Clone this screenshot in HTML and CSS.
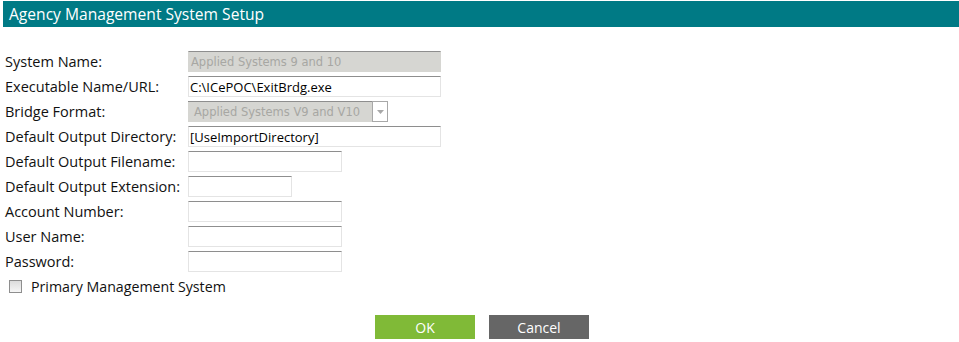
FILE: index.html
```html
<!DOCTYPE html>
<html lang="en">
  <head>
    <meta charset="UTF-8" />
    <meta name="viewport" content="width=device-width, initial-scale=1.0" />
    <title>Agency Management System Setup</title>
    <link rel="stylesheet" href="styles.css">
  </head>
  <body>
    <div class="header">Agency Management System Setup</div>
    <form class="setup">
      <div class="fields">
        <label>System Name:</label>
        <input class="wide" type="text" value="Applied Systems 9 and 10" disabled>

        <label>Executable Name/URL:</label>
        <input class="wide" type="text" value="C:\ICePOC\ExitBrdg.exe">

        <label>Bridge Format:</label>
        <div class="select">
          <span class="select-value">Applied Systems V9 and V10</span>
          <span class="select-arrow">
            <svg width="7" height="4" viewBox="0 0 7 4"><path d="M0 0h7L3.5 4z" fill="#a8a8a8"/></svg>
          </span>
        </div>

        <label>Default Output Directory:</label>
        <input class="wide" type="text" value="[UseImportDirectory]">

        <label>Default Output Filename:</label>
        <input class="medium" type="text">

        <label>Default Output Extension:</label>
        <input class="short" type="text">

        <label>Account Number:</label>
        <input class="medium" type="text">

        <label>User Name:</label>
        <input class="medium" type="text">

        <label>Password:</label>
        <input class="medium" type="password">
      </div>

      <label class="check">
        <span class="box"></span>
        Primary Management System
      </label>

      <div class="buttons">
        <button type="button" class="ok">OK</button>
        <button type="button" class="cancel">Cancel</button>
      </div>
    </form>
  </body>
</html>
```

FILE: styles.css
```css
body {
  margin: 0;
  padding: 1px 0 0 3px;
  font-family: "Open Sans", sans-serif;
  font-size: 14.5px;
  color: #111;
  background-color: #fff;
}

.header {
  height: 26px;
  line-height: 26px;
  padding-left: 6px;
  background-color: #007a85;
  color: #fff;
  font-size: 15.6px;
}

.setup {
  padding: 24px 0 0 2px;
}

.fields {
  display: grid;
  grid-template-columns: 183px auto;
  grid-auto-rows: 25px;
  align-items: start;
}

.fields label {
  line-height: 21px;
}

input {
  box-sizing: border-box;
  height: 21px;
  margin: 0;
  padding: 0 1px;
  border: 1px solid #e4e4e4;
  border-top-color: #8e8e8e;
  font-family: "Open Sans", sans-serif;
  font-size: 13px;
  color: #000;
  background-color: #fff;
  outline: none;
}

input:disabled {
  padding: 0 2px;
  background-color: #d6d6d2;
  color: #a7a7a3;
  border-color: #d6d6d2;
  border-top-color: #8e8e8e;
  font-family: "DejaVu Sans", sans-serif;
  font-size: 11.5px;
}

.wide {
  width: 253px;
}

.medium {
  width: 154px;
}

.short {
  width: 104px;
}

.select {
  box-sizing: border-box;
  display: flex;
  width: 200px;
  height: 21px;
  background-color: #d6d6d2;
  border-top: 1px solid #8e8e8e;
}

.select-value {
  flex: 1;
  padding-left: 6px;
  line-height: 20px;
  font-family: "DejaVu Sans", sans-serif;
  font-size: 11.5px;
  color: #a7a7a3;
}

.select-arrow {
  box-sizing: border-box;
  width: 16px;
  margin-top: -1px;
  border: 1px solid #a8a8a8;
  background-color: #fff;
  display: flex;
  justify-content: center;
  align-items: center;
}

.check {
  display: flex;
  align-items: center;
  gap: 9px;
  height: 17px;
  margin: 2px 0 0 4px;
  font-size: 14.2px;
}

.box {
  box-sizing: border-box;
  width: 13px;
  height: 13px;
  border: 1px solid #8e8e8e;
  background: linear-gradient(#dcdcdc, #f6f6f6);
}

.buttons {
  display: flex;
  gap: 14px;
  margin: 20px 0 0 370px;
}

button {
  width: 100px;
  height: 24px;
  border: none;
  font-family: "Open Sans", sans-serif;
  font-size: 14px;
  color: #fff;
  cursor: pointer;
}

.ok {
  background-color: #80ba37;
}

.cancel {
  background-color: #666;
}
```
